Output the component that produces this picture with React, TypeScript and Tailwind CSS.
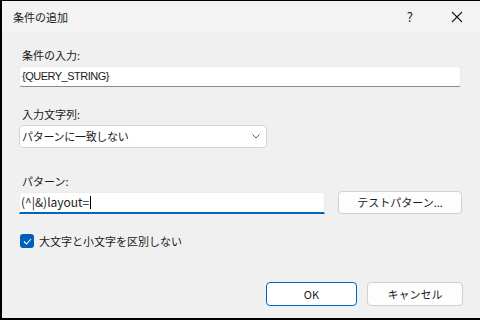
const font = { fontFamily: '"Noto Sans CJK JP", "Liberation Sans", sans-serif' };

function TitleBar() {
  return (
    <div className="flex h-[31px] items-center bg-[#f3f3f3] pl-[11px]">
      <span className="text-[11px] leading-4 text-[#1a1a1a]">条件の追加</span>
      <span className="ml-auto mr-[38px] text-[13px] leading-4 text-[#1a1a1a]">?</span>
      <svg width="12" height="12" viewBox="0 0 12 12" className="mr-[17px]">
        <path d="M1 1 L11 11 M11 1 L1 11" stroke="#1a1a1a" strokeWidth="1.1" />
      </svg>
    </div>
  );
}

function Label({ children }: { children: React.ReactNode }) {
  return <div className="pl-[3px] text-[11px] leading-4 text-[#1a1a1a]">{children}</div>;
}

export default function App() {
  return (
    <div
      className="h-[320px] w-[480px] overflow-hidden border-b-2 border-l-2 border-t border-black bg-[#f0f0f0]"
      style={font}
    >
      <TitleBar />
      <div className="pl-[17px]">
        <div className="mt-[15px]">
          <Label>条件の入力:</Label>
        </div>
        <div className="mt-[3px] flex h-[21px] w-[442px] items-center rounded-[3px] border border-[#ececec] border-b-[#8a8a8a] bg-white pl-[2px] text-[#1a1a1a]">
          <span
            className="text-[11px] tracking-[-0.5px]"
            style={{ fontFamily: '"Liberation Sans", sans-serif' }}
          >
            {"{QUERY_STRING}"}
          </span>
        </div>

        <div className="mt-[19px]">
          <Label>入力文字列:</Label>
        </div>
        <div className="mt-[3px] flex h-[23px] w-[248px] items-center rounded-[4px] border border-[#d5d5d5] bg-white pl-[2px] pr-[6px] text-[11px] text-[#1a1a1a]">
          <span className="tracking-[-0.3px]">パターンに一致しない</span>
          <svg width="8" height="5" viewBox="0 0 8 5" className="ml-auto">
            <path d="M0.5 0.5 L4 4 L7.5 0.5" stroke="#606060" strokeWidth="1" fill="none" />
          </svg>
        </div>

        <div className="mt-[25px]">
          <Label>パターン:</Label>
        </div>
        <div className="mt-[2px] flex items-center">
          <div className="flex h-[22px] w-[306px] items-center rounded-t-[3px] border-x border-t border-[#ececec] border-b-2 border-b-[#0067c0] bg-white pl-[1px] text-[12px] text-[#1a1a1a]">
            <span>(^|&amp;)layout=</span>
            <span className="ml-px h-[13px] w-px bg-black" />
          </div>
          <button className="ml-[13px] flex h-[23px] w-[124px] items-center justify-center rounded-[4px] border border-[#d0d0d0] bg-[#fdfdfd] text-[11px] text-[#1a1a1a]">
            テストパターン...
          </button>
        </div>

        <div className="mt-[19px] flex items-center">
          <div className="ml-[1px] flex h-[14px] w-[14px] items-center justify-center rounded-[3px] bg-[#005fb8]">
            <svg width="9" height="7" viewBox="0 0 9 7">
              <path d="M1 3.5 L3.5 6 L8 1" stroke="white" strokeWidth="1.1" fill="none" />
            </svg>
          </div>
          <span className="ml-[5px] text-[11px] leading-4 text-[#1a1a1a]">大文字と小文字を区別しない</span>
        </div>

        <div className="mt-[33px] flex pl-[247px]">
          <button className="flex h-[24px] w-[91px] items-center justify-center rounded-[4px] border border-[#0067c0] bg-white text-[11px] text-[#1a1a1a]">
            OK
          </button>
          <button className="ml-[10px] flex h-[24px] w-[96px] items-center justify-center rounded-[4px] border border-[#d0d0d0] bg-[#fdfdfd] text-[11px] text-[#1a1a1a]">
            キャンセル
          </button>
        </div>
      </div>
    </div>
  );
}
